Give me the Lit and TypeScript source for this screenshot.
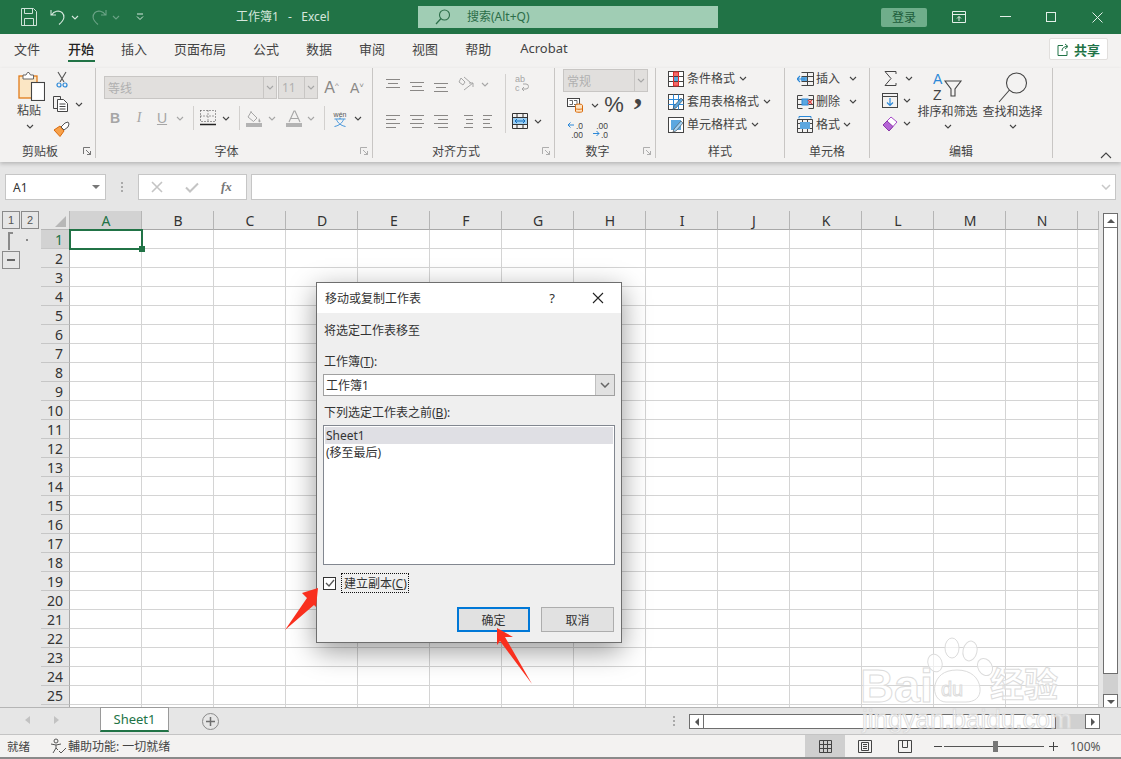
import { LitElement, html, css, svg } from "lit";
import { customElement } from "lit/decorators.js";

const ic = (w: number, h: number, c: unknown) => html`<svg width=${w} height=${h} viewBox="0 0 ${w} ${h}" fill="none">${c}</svg>`;
const chev = (col = "#444") => ic(8, 5, svg`<path d="M1 1l3 3 3-3" stroke=${col} stroke-width="1.1"/>`);
const lines = (ys: number[], xs: [number, number][], col = "#8a8886") =>
  ic(16, 16, ys.map((y, i) => svg`<path d="M${xs[i][0]} ${y + 0.5}H${xs[i][1]}" stroke=${col}/>`));
const D = "#a6a6a6";

const icons = {
  save: ic(16, 18, svg`<path d="M.5.5h12l3 3v14H.5z M3.5.5v5h8v-5 M3.5 17.5v-7h9v7" stroke="#cfe3d8"/>`),
  undo: ic(16, 18, svg`<path d="M1 2v5h5M1.500 7C4 3 9 2 12 4.500c3 3 3 7-3 12" stroke="#d6e8de" stroke-width="1.1"/>`),
  redo: ic(16, 18, svg`<path d="M15 2v5h-5M14.500 7C12 3 7 2 4 4.500c-3 3-3 7 3 12" stroke="#6ba386" stroke-width="1.1"/>`),
  qat: ic(8, 8, svg`<path d="M1 1h6M1 3.500l3 3 3-3" stroke="#d6e8de"/>`),
  search: ic(16, 16, svg`<circle cx="9.500" cy="6" r="5" stroke="#2c6e49" stroke-width="1.1"/><path d="M6 9.500L1 15" stroke="#2c6e49" stroke-width="1.2"/>`),
  ribbonDisp: ic(14, 12, svg`<path d="M.5.5h13v11H.5zM.5 3.500h13M7 10V5.500M5 7.500l2-2 2 2" stroke="#e3efe8"/>`),
  min: ic(11, 2, svg`<path d="M0 .5h11" stroke="#e3efe8"/>`),
  max: ic(10, 10, svg`<rect x=".5" y=".5" width="9" height="9" stroke="#e3efe8"/>`),
  close: ic(11, 11, svg`<path d="M.5.500l10 10M10.500.500l-10 10" stroke="#e3efe8"/>`),
  share: ic(13, 13, svg`<path d="M6 2.500H1v10h9V8M5 8c0-3 2-4.500 5-4.500M8 1l3 2.500L8 6" stroke="#217346" stroke-width="1"/>`),
  paste: ic(27, 29, svg`<rect x="1" y="4" width="18" height="22" fill="#fbe6c4" stroke="#e07b1a" stroke-width="1.300"/><path d="M5 7V3h3l1.500-2.500h1.500l1.500 2.500h3v4z" fill="#fff" stroke="#666"/><rect x="13.500" y="10.500" width="13" height="18" fill="#fff" stroke="#444" stroke-width="1.100"/>`),
  cut: ic(12, 17, svg`<path d="M2 1l6 10M10 1l-6 10" stroke="#555" stroke-width="1.100"/><circle cx="3" cy="14" r="2" stroke="#2b88d8" stroke-width="1.200"/><circle cx="9" cy="14" r="2" stroke="#2b88d8" stroke-width="1.200"/>`),
  copy: ic(16, 16, svg`<path d="M4.500 12.500H.5V.5h7v3" stroke="#444"/><path d="M4.500 3.500h6l4 4v8h-10z M6.500 8h6M6.500 10.500h6M6.500 13h6" stroke="#444" fill="#fff"/>`),
  brush: ic(17, 16, svg`<path d="M1 9l6-4 4 5-4 5.500z" fill="#f7a14a" stroke="#d9690b"/><path d="M8 6l4-4 3-1 1 2-1 3-4 3z" fill="#fff" stroke="#555"/>`),
  launcher: (c = "#666") => ic(8, 8, svg`<path d="M.5 7V.5H7M3 3l4.500 4.500M7.500 4v3.500H4" stroke=${c} stroke-width=".9"/>`),
  bold: html`<span class="glyph b">B</span>`,
  italic: html`<span class="glyph i">I</span>`,
  under: html`<span class="glyph u">U</span>`,
  border: ic(16, 16, svg`<path d="M.5.500h15v11H.5zM8 .5v11M.5 6h15" stroke="#444" stroke-dasharray="1 2"/><path d="M0 14.500h16" stroke="#222" stroke-width="1.500"/>`),
  fill: ic(17, 17, svg`<path d="M5 2l6 6-3.500 3.500L2 7z M5 2V1" stroke="#a6a6a6"/><path d="M13 8c1 2 1.500 2.500 1.500 3.500s-2 1-2 0 0-1 .5-3.500" fill="#a6a6a6"/><rect y="13" width="16" height="4" fill="#b3b3b3"/>`),
  fontcol: html`<svg width="17" height="17" viewBox="0 0 17 17" fill="none"><path d="M3 12L8 1h1l5 11M5 8.500h7" stroke="#a6a6a6" stroke-width="1.100"/><rect y="13" width="16" height="4" fill="#b3b3b3"/></svg>`,
  wen: html`<svg width="16" height="17" viewBox="0 0 16 17" fill="none"><text x="8" y="6.500" text-anchor="middle" font-size="7" fill="#555" font-family="Liberation Sans">wén</text><path d="M2.500 9h11M8 7.500v1.500M4.500 9.500c1 3 4 6 9 7M11.500 9.500c-1 3-4 6-9 7" stroke="#2b88d8" stroke-width=".9"/></svg>`,
  orient: ic(17, 16, svg`<path d="M3 2l4 4-2 3-4-3zM6 1l7 6M6 14l9-7M15 11V7h-4" stroke="#a6a6a6"/>`),
  wrap: ic(14, 18, svg`<text x="0" y="7" font-size="9" fill="#a6a6a6" font-family="Liberation Sans">ab</text><text x="0" y="16" font-size="9" fill="#a6a6a6" font-family="Liberation Sans">c</text><path d="M7 14h4a2 2 0 0 0 0-5H8M9 12l-2 2 2 2" stroke="#a6a6a6"/>`),
  merge: ic(16, 16, svg`<path d="M.5.5h15v15H.5zM.5 4.500h15M.5 11.500h15M5 .5v4M11 .5v4M5 11.500v4M11 11.500v4" stroke="#333"/><rect x="1" y="5" width="14" height="6" fill="#9fd0f3"/><path d="M3 8h10M5 6l-2 2 2 2M11 6l2 2-2 2" stroke="#0f6cbd"/>`),
  acct: ic(16, 16, svg`<rect x=".5" y="1.500" width="12" height="8" fill="#fff" stroke="#444"/><path d="M2.500 3.500h3v4h-3M7 3.500h3v4H7" stroke="#444" stroke-width=".8"/><ellipse cx="12" cy="8.500" rx="3.500" ry="1.500" fill="#fde3c2" stroke="#d9690b"/><path d="M8.500 8.500v6c0 1 7 1 7 0v-6M8.500 11.500c0 1 7 1 7 0" fill="#fde3c2" stroke="#d9690b"/>`),
  dec1: html`<svg width="16" height="17" viewBox="0 0 16 17" fill="none"><path d="M7 4H1M3.500 1.500L1 4l2.500 2.500" stroke="#2b88d8"/><text x="16" y="8" text-anchor="end" font-size="8.500" fill="#444" font-family="Liberation Sans">.0</text><text x="16" y="16.500" text-anchor="end" font-size="8.500" fill="#444" font-family="Liberation Sans">.00</text></svg>`,
  dec2: html`<svg width="16" height="17" viewBox="0 0 16 17" fill="none"><text x="16" y="8" text-anchor="end" font-size="8.500" fill="#444" font-family="Liberation Sans">.00</text><path d="M1 12.500h6M4.500 10L7 12.500 4.500 15" stroke="#2b88d8"/><text x="16" y="16.500" text-anchor="end" font-size="8.500" fill="#444" font-family="Liberation Sans">.0</text></svg>`,
  cond: ic(16, 16, svg`<rect x=".5" y=".5" width="15" height="15" fill="#fff" stroke="#444"/><rect x="5" y="1" width="6" height="5" fill="#f26a6a"/><rect x="5" y="6" width="6" height="5" fill="#5ba7e0"/><rect x="5" y="11" width="6" height="4" fill="#f26a6a"/><path d="M5.500.5v15M10.500.5v15M.5 5.500h15M.5 10.500h15" stroke="#444"/><path d="M5.500 1v14h5V1z" stroke="#e02b2b"/>`),
  table: ic(17, 16, svg`<rect x=".5" y=".5" width="15" height="15" fill="#fff" stroke="#444"/><path d="M5.500.5v15M10.500.5v15M.5 5.500h15M.5 10.500h15" stroke="#2b88d8"/><path d="M5 15l1-3 7-8 2 2-7 8z" fill="#5ba7e0" stroke="#444" stroke-width=".6"/>`),
  cellsty: ic(17, 16, svg`<rect x=".5" y=".5" width="15" height="15" fill="#fff" stroke="#444"/><rect x="3" y="3" width="10" height="10" fill="#5ba7e0"/><path d="M5 15l1-3 7-8 2 2-7 8z" fill="#9fd0f3" stroke="#444" stroke-width=".6"/>`),
  ins: ic(17, 14, svg`<path d="M4.500.5h12v13h-12M10.500.5v13M4.500 4.500h12M4.500 9.500h12" stroke="#444"/><rect x="4" y="5" width="6" height="4" fill="#5ba7e0"/><path d="M0 7h8M3 4L0 7l3 3" stroke="#2b88d8" stroke-width="1.200"/>`),
  del: ic(17, 14, svg`<path d="M5.500.5H.5v13h5M.5 4.500h5M.5 9.500h5M11.500.5h5v13h-5M11.500 4.500h5M11.500 9.500h5" stroke="#444"/><rect x="5" y="4" width="6" height="6" fill="#5ba7e0" stroke="#2b88d8"/><path d="M11 5l4 4M15 5l-4 4" stroke="#e04343" stroke-width="1.200"/>`),
  fmt: ic(16, 17, svg`<path d="M.5 3.500h15v13H.5zM.5 7.500h15M.5 12.500h15M5.500 3.500v13M10.500 3.500v13" stroke="#444"/><rect x="3" y="6" width="10" height="7" fill="#5ba7e0"/><path d="M2 .5h12M2 2.500v-2M14 2.500v-2" stroke="#2b88d8"/>`),
  sigma: ic(13, 15, svg`<path d="M12 3V.5H1l6 7-6 7h11V12" stroke="#444"/>`),
  filld: ic(16, 15, svg`<rect x=".5" y=".5" width="15" height="14" stroke="#444"/><path d="M.5 3.500h15" stroke="#444"/><path d="M8 5v7M5 9.500L8 12.500l3-3" stroke="#2b88d8" stroke-width="1.200"/>`),
  eraser: ic(16, 16, svg`<path d="M1 9l8-8 6 5-8 9z" fill="#fff" stroke="#a64ac9"/><path d="M1 9l4-4 6 5.500-4 4.500z" fill="#b565d6" stroke="#8a3aa8"/>`),
  sort: html`<svg width="30" height="29" viewBox="0 0 30 29" fill="none"><text x="0" y="12" font-size="14" fill="#2b88d8" font-family="Liberation Sans">A</text><text x="0" y="28" font-size="14" fill="#444" font-family="Liberation Sans">Z</text><path d="M12 9h16l-6 8v7h-4v-7z" stroke="#444" stroke-width="1.100"/></svg>`,
  find: ic(30, 32, svg`<circle cx="18.500" cy="11" r="10" stroke="#444" stroke-width="1.100"/><path d="M11.500 18L1 30" stroke="#444" stroke-width="1.100"/>`),
  xGray: ic(12, 12, svg`<path d="M1 1l10 10M11 1L1 11" stroke="#c4c4c4" stroke-width="1.600"/>`),
  check: ic(14, 11, svg`<path d="M1 5.500l4 4 8-8" stroke="#c4c4c4" stroke-width="2"/>`),
  bigChev: (c = "#c4c4c4") => ic(10, 6, svg`<path d="M1 1l4 4 4-4" stroke=${c} stroke-width="1.500"/>`),
  viewGrid: ic(13, 13, svg`<path d="M.5.5h12v12H.5zM4.500.5v12M8.500.5v12M.5 4.500h12M.5 8.500h12" stroke="#444"/>`),
  viewPage: ic(14, 13, svg`<path d="M.5.5h13v12H.5zM3.500 2.500h7v8h-7zM5 4.500h4M5 6.500h4M5 8.500h4" stroke="#444"/>`),
  viewBreak: ic(14, 13, svg`<path d="M.5.5h13v12H.5zM4.500.5v7h5v-7" stroke="#444"/>`),
};

type Slot = [number, unknown];
const rowOf = (items: Slot[]) => items.map(([w, c]) => html`<span class="slot" style="width:${w}px">${c}</span>`);
const SEP = html`<span class="vsep"></span>`;
const COLS = ["A","B","C","D","E","F","G","H","I","J","K","L","M","N",""];

@customElement("app-root")
export class AppRoot extends LitElement {
  static styles = css`
    :host { display:block; position:relative; width:1121px; height:759px; overflow:hidden; background:#e6e6e6;
      font-family:"Noto Sans","Noto Sans CJK SC",sans-serif; font-size:12px; color:#444; }
    * { box-sizing:border-box; }
    svg { display:block; flex:none; }
    .title { height:34px; background:#217346; color:#d5e6dc; display:flex; align-items:center; font-size:12px; }
    .qat { display:flex; align-items:center; width:236px; padding-left:21px; }
    .docname { width:182px; font-size:12px; white-space:pre; word-spacing:1.500px; padding-bottom:3px; }
    .searchbox { width:300px; height:22px; background:#a0cdb4; display:flex; align-items:center; padding-left:17px; gap:16px; color:#2c6e49; }
    .searchbox span { padding-bottom:2px; }
    .login { margin-left:163px; width:46px; height:19px; background:#6fae8b; border-radius:2px; color:#1c5c3a; display:flex; align-items:center; justify-content:center; font-size:12px; padding-bottom:1px; }
    .winbtns { display:flex; align-items:center; margin-left:9px; }
    .slot { display:flex; align-items:center; justify-content:center; flex:none; }
    .tabs { height:34px; background:#f3f2f1; display:flex; align-items:center; padding-left:14px; gap:27px; font-size:13px; position:relative; color:#444; }
    .tab { height:34px; display:flex; align-items:center; position:relative; padding-bottom:6px; }
    .tab:first-child { margin-right:1px; }
    .tab.on { color:#222; font-weight:500; }
    .tab.on::after { content:""; position:absolute; left:0; right:-1px; bottom:6px; height:2px; background:#217346; }
    .acro { font-size:13px; margin-left:2px; }
    .shareb { position:absolute; right:13px; top:4px; width:59px; height:22px; background:#fff; border:1px solid #e1dfdd; border-radius:2px; display:flex; align-items:center; justify-content:center; gap:4px; color:#217346; font-weight:700; font-size:13px; }
    .ribbon { height:94px; background:#f3f2f1; display:flex; box-shadow:0 2px 4px rgba(0,0,0,.2); position:relative; }
    .grp { height:90px; border-right:1px solid #c8c6c4; position:relative; display:flex; flex-direction:column; flex:none; }
    .body { height:74px; flex:none; display:flex; flex-direction:column; }
    .lab { height:16px; display:grid; grid-template-columns:1fr auto 1fr; align-items:center; color:#444; font-size:12px; }
    .lab.hasl { padding-right:15px; position:relative; }
    .lab > span:first-child { grid-column:2; }
    .lab .launch { position:absolute; right:4px; top:5px; display:block; }
    .r { display:flex; align-items:center; }
    .top { display:flex; align-items:flex-start; }
    .vsep { width:1px; height:24px; background:#d2d0ce; display:block; }
    .asep { position:absolute; left:132px; top:6px; width:1px; height:59px; background:#d2d0ce; }
    .combo { height:23px; background:#e1dfdd; border:1px solid #c8c6c4; color:#b0b0b0; display:flex; align-items:center; padding-left:3px; flex:none; }
    .combo .dd { margin-left:auto; width:13px; height:100%; border-left:1px solid #c8c6c4; display:flex; align-items:center; justify-content:center; }
    .glyph { font-family:"Liberation Serif",serif; font-size:14px; color:#a6a6a6; }
    .glyph.b { font-family:"Liberation Sans"; font-weight:700; }
    .glyph.i { font-style:italic; }
    .glyph.u { font-family:"Liberation Sans"; text-decoration:underline; }
    .bigA { font-family:"Liberation Sans"; color:#8a8886; font-size:16px; }
    .bigA small { font-size:8px; vertical-align:5px; }
    .pctg { font:400 22px "Liberation Sans"; color:#444; }
    .comma { font:700 34px/10px "Liberation Serif"; color:#444; display:block; height:10px; transform:translateY(-12px); }
    .gsp { display:flex; align-items:center; height:23px; padding-left:12px; }
    .gsp .t { margin-left:3px; margin-right:4px; color:#444; white-space:nowrap; padding-bottom:1px; }
    .col { display:flex; flex-direction:column; align-items:center; }
    .fbar { height:49px; background:#e6e6e6; display:flex; padding:12px 5px 0 5px; }
    .fbox { height:26px; background:#fff; border:1px solid #c6c6c6; display:flex; align-items:center; flex:none; }
    .name { width:101px; padding-left:7px; font-size:12px; color:#333; }
    .tri { margin-left:auto; margin-right:5px; width:0; height:0; border:4px solid transparent; border-top:4px solid #777; border-bottom:0; }
    .dots { width:32px; display:flex; flex-direction:column; align-items:center; justify-content:center; gap:2px; height:26px; flex:none; }
    .dots i { width:2px; height:2px; background:#aaa; display:block; }
    .fx { width:109px; justify-content:flex-start; padding-left:12px; }
    .fx .f { font-family:"Liberation Serif",serif; font-style:italic; font-weight:700; font-size:13px; color:#777; margin-left:22px; }
    .finput { margin-left:4px; flex:1; justify-content:flex-end; padding-right:4px; }
    .sheet { height:496px; display:flex; background:#e6e6e6; position:relative; overflow:hidden; }
    .outline { width:41px; flex:none; position:relative; }
    .olbtns { display:flex; padding-left:2px; gap:1px; }
    .olb { width:18px; height:18px; border:1px solid #8a8a8a; display:flex; align-items:center; justify-content:center; font-size:11px; color:#555; font-family:"Liberation Sans"; }
    .olbr { height:20px; margin:3px 0 0 8px; position:relative; display:flex; }
    .olbr i { width:5px; height:18px; border-left:2px solid #8a8a8a; border-top:2px solid #8a8a8a; display:block; }
    .olbr b { width:2px; height:2px; background:#888; margin:7px 0 0 13px; display:block; }
    .olm { width:18px; height:18px; margin-left:2px; border:1px solid #8a8a8a; display:flex; align-items:center; justify-content:center; }
    .olm i { width:8px; height:2px; background:#666; display:block; }
    .grid { width:1058px; flex:none; display:grid; grid-template-columns:29px repeat(14,72px) 21px; grid-auto-rows:19px; background:#fff; position:relative; }
    .corner { background:#e6e6e6; position:relative; border-right:1px solid #b5b5b5; border-bottom:1px solid #b5b5b5; display:flex; justify-content:flex-end; align-items:flex-end; padding:0 3px 2px 0; }
    .corner i { width:0; height:0; border-left:11px solid transparent; border-bottom:11px solid #b7b7b7; display:block; }
    .ch { background:#e6e6e6; border-right:1px solid #b5b5b5; border-bottom:1px solid #a8a8a8; display:flex; align-items:center; justify-content:center; font-size:14px; color:#333; font-family:"Noto Sans"; padding:1px 0 0 1px; }
    .ch.on, .rh.on { background:#d2d2d2; color:#217346; }
    .rh { background:#e6e6e6; border-right:1px solid #a8a8a8; border-bottom:1px solid #c6c6c6; display:flex; align-items:center; justify-content:flex-end; padding:1px 6px 0 0; font-size:14px; color:#333; }
    .c { border-right:1px solid #d4d4d4; border-bottom:1px solid #d4d4d4; background:#fff; }
    .sel { position:absolute; left:28px; top:18px; width:74px; height:21px; border:2px solid #217346; pointer-events:none; }
    .sel i { position:absolute; right:-4px; bottom:-4px; width:6px; height:6px; background:#217346; display:block; }
    .vsb { flex:1; position:relative; padding:2px 0 0 4px; display:flex; flex-direction:column; }
    .sb { width:15px; border:1px solid #6e6e6e; background:#fff; flex:none; display:flex; align-items:center; justify-content:center; }
    .sb.btn { height:15px; }
    .vthumb { height:446px; border-top:0; }
    .vtrack { width:15px; height:20px; background:#d0d0d0; flex:none; }
    .up { width:0; height:0; border:4px solid transparent; border-bottom:4px solid #555; border-top:0; display:block; }
    .dn { width:0; height:0; border:4px solid transparent; border-top:4px solid #555; border-bottom:0; display:block; }
    .lf { width:0; height:0; border:4px solid transparent; border-right:4px solid #555; border-left:0; display:block; }
    .rt { width:0; height:0; border:4px solid transparent; border-left:4px solid #555; border-right:0; display:block; }
    .tabsbar { height:28px; background:#e6e6e6; border-top:1px solid #b5b5b5; border-bottom:1px solid #c4c4c4; display:flex; position:relative; align-items:flex-start; }
    .navs { width:100px; flex:none; display:flex; padding:8px 0 0 25px; gap:24px; }
    .lfg { width:0; height:0; border:4px solid transparent; border-right:5px solid #c2c2c2; border-left:0; display:block; }
    .rtg { width:0; height:0; border:4px solid transparent; border-left:5px solid #c2c2c2; border-right:0; display:block; }
    .stab { width:69px; height:25px; margin-top:-1px; background:#fff; border:1px solid #9a9a9a; border-bottom:2px solid #217346; color:#217346; display:flex; align-items:center; justify-content:center; font-size:13px; flex:none; }
    .add { width:17px; height:17px; margin:5px 0 0 33px; border:1.500px solid #8a8a8a; border-radius:50%; position:relative; flex:none; color:#6e6e6e; display:flex; align-items:center; justify-content:center; }
    .hs { margin-left:auto; display:flex; align-items:flex-start; padding:6px 21px 0 0; }
    .hdots { width:18px; display:flex; flex-direction:column; gap:2px; align-items:center; padding-top:2px; margin-right:6px; }
    .hdots i { width:2px; height:2px; background:#aaa; display:block; }
    .hb { width:15px; height:15px; border:1px solid #6e6e6e; background:#fff; display:flex; align-items:center; justify-content:center; flex:none; }
    .hthumb { width:353px; height:15px; border:1px solid #6e6e6e; background:#fff; flex:none; margin-left:-1px; }
    .htrack { width:29px; height:15px; background:#d0d0d0; flex:none; }
    .status { height:22px; background:#f3f2f1; display:flex; align-items:center; padding-left:7px; position:relative; font-size:11.500px; color:#444; }
    .s1 { width:33px; }
    .s2 { display:flex; align-items:center; gap:1px; margin-left:10px; font-size:12px; }
    .vbtns { margin-left:auto; display:flex; align-items:center; height:22px; }
    .vb { width:40px; height:22px; display:flex; align-items:center; justify-content:center; flex:none; }
    .vb.on { background:#cfcfcf; }
    .zm { display:flex; align-items:center; margin-left:9px; width:124px; color:#444; }
    .zline { width:100px; height:1px; background:#555; position:relative; flex:none; display:block; margin:0 5px 0 2px; }
    .zline i { position:absolute; left:49px; top:-5px; width:5px; height:11px; background:#777; display:block; }
    .pct { width:63px; padding-left:12px; font-size:12px; color:#555; }
    .foot { height:2px; background:#8a8a8a; }
    .dlg { position:absolute; left:316px; top:282px; width:306px; height:361px; background:#efefef; border:1px solid #6e6e6e; box-shadow:0 8px 26px rgba(0,0,0,.4); display:flex; flex-direction:column; color:#333; }
    .dhead { height:30px; background:#fff; flex:none; display:flex; align-items:center; padding-left:8px; font-size:12px; }
    .dhead .q { margin-left:auto; width:46px; text-align:center; font-size:13px; }
    .dhead .x { width:46px; display:flex; justify-content:center; margin-right:0; }
    .dbody { padding:0 6px; flex:1; display:flex; flex-direction:column; }
    .d1 { margin-top:9px; height:17px; line-height:17px; padding-left:1px; }
    .d2 { margin-top:14px; height:17px; line-height:17px; padding-left:1px; }
    .dcombo { margin-top:4px; height:22px; width:292px; border:1px solid #a0a0a0; background:#fff; display:flex; align-items:center; padding-left:2px; flex:none; }
    .dcombo .dd { margin-left:auto; width:19px; height:100%; background:#e1e1e1; border-left:1px solid #c0c0c0; display:flex; align-items:center; justify-content:center; }
    .d3 { margin-top:8px; height:17px; line-height:17px; padding-left:1px; }
    .dlist { margin-top:4px; height:140px; width:292px; border:1px solid #828790; background:#fff; padding:1px; flex:none; }
    .dlist div { height:17px; line-height:17px; padding-left:1px; }
    .dlist .s { background:#dfdfe4; }
    .chk { display:flex; align-items:center; margin-top:8px; height:20px; }
    .cbx { width:13px; height:13px; border:1px solid #333; background:#fff; display:flex; align-items:center; justify-content:center; flex:none; }
    .clab { margin-left:5px; width:68px; height:20px; border:1px dotted #111; display:flex; align-items:center; padding-left:2px; white-space:nowrap; }
    .dbtns { display:flex; justify-content:flex-end; gap:11px; margin-top:14px; padding-right:1px; }
    .dbtn { width:73px; height:25px; background:#e1e1e1; border:1px solid #adadad; display:flex; align-items:center; justify-content:center; }
    .dbtn.def { border:2px solid #0078d7; }
    .ov { position:absolute; left:0; top:0; pointer-events:none; }
    .colp { position:absolute; left:1100px; top:84px; }
    .pastec { width:52px; padding:4px 0 0 18px; align-items:flex-start; }
    .pastec .lbl { margin:2px 0 0 -1px; line-height:16px; white-space:nowrap; }
    .pastec .ch2 { margin:5px 0 0 8px; }
    .clipc { width:34px; align-items:flex-start; padding:3px 0 0 1px; }
    .edc { width:48px; align-items:flex-start; padding:0 0 0 12px; }
    .sortc { width:65px; padding-top:4px; margin-left:-3px; }
    .findc { width:65px; padding-top:4px; }
    .sortc .lbl2 { margin-top:3px; line-height:16px; white-space:nowrap; }
    .findc .lbl2 { line-height:16px; white-space:nowrap; }
    .c5 { margin-top:4px; }
  `;

  render() {
    const rows = Array.from({ length: 26 }, (_, i) => i + 1);
    return html`
      <div class="title">
        <div class="qat">
          ${rowOf([[16, icons.save],[13, ""],[16, icons.undo],[2,""],[14, chev("#d6e8de")],[9,""],[16, icons.redo],[2,""],[14, chev("#6ba386")],[9,""],[16, icons.qat]])}
        </div>
        <div class="docname">工作簿1  -  Excel</div>
        <div class="searchbox">${icons.search}<span>搜索(Alt+Q)</span></div>
        <div class="login">登录</div>
        <div class="winbtns">
          ${rowOf([[46, icons.ribbonDisp],[46, icons.min],[46, icons.max],[46, icons.close]])}
        </div>
      </div>

      <div class="tabs">
        ${["文件","开始","插入","页面布局","公式","数据","审阅","视图","帮助"].map((t) => html`<div class="tab ${t === "开始" ? "on" : ""}">${t}</div>`)}
        <div class="tab acro">Acrobat</div>
        <div class="shareb">${icons.share}<span>共享</span></div>
      </div>

      <div class="ribbon">
        ${this.grp(96, "剪贴板", "#666", html`
          <div class="top">
            <div class="col pastec">
              ${icons.paste}<div class="lbl">粘贴</div><div class="ch2">${chev()}</div>
            </div>
            <div class="col clipc">
              <div style="padding-left:3px">${icons.cut}</div>
              <div class="r" style="margin-top:8px;gap:6px">${icons.copy}${chev()}</div>
              <div style="margin-top:9px">${icons.brush}</div>
            </div>
          </div>`)}
        ${this.grp(277, "字体", "#a6a6a6", html`
          <div class="r" style="padding:8px 0 0 8px">
            <div class="combo" style="width:173px"><span>等线</span><span class="dd">${chev(D)}</span></div>
            <div class="combo" style="width:40px;margin-left:1px"><span>11</span><span class="dd">${chev(D)}</span></div>
            ${rowOf([[27, html`<span class="bigA">A<small>^</small></span>`],[24, html`<span class="bigA" style="font-size:14px">A<small>˅</small></span>`]])}
          </div>
          <div class="r" style="height:24px;margin:7px 0 0 7px">
            ${rowOf([[24, icons.bold],[24, icons.italic],[22, icons.under],[14, chev(D)],[12, SEP],[18, icons.border],[18, chev()],[8, SEP],[22, icons.fill],[14, chev(D)],[4,""],[22, icons.fontcol],[12, chev(D)],[14, SEP],[18, icons.wen],[18, chev()]])}
          </div>`)}
        ${this.grp(182, "对齐方式", "#a6a6a6", html`
          <span class="asep"></span>
          <div class="r" style="height:30px;margin:1px 0 0 8px">
            ${rowOf([[24, lines([3,7,11],[[1,15],[3,13],[1,15]])],[24, lines([6,10,14],[[1,15],[3,13],[1,15]])],[24, lines([7,11,15],[[1,15],[3,13],[1,15]])],[26, icons.orient],[12, chev(D)],[16,""],[30, icons.wrap]])}
          </div>
          <div class="r" style="height:24px;margin:10px 0 0 8px">
            ${rowOf([[24, lines([2,6,10,14],[[1,15],[1,11],[1,15],[1,11]])],[24, lines([2,6,10,14],[[1,15],[3,13],[1,15],[3,13]])],[24, lines([2,6,10,14],[[1,15],[5,15],[1,15],[5,15]])],[25, lines([2,6,10,14],[[6,15],[8,15],[8,15],[6,15]])],[24, lines([2,6,10,14],[[1,10],[1,8],[1,8],[1,10]])],[8,""],[20, icons.merge],[16, chev()]])}
          </div>`)}
        ${this.grp(101, "数字", "#a6a6a6", html`
          <div class="combo" style="width:85px;margin:1px 0 0 8px"><span>常规</span><span class="dd">${chev(D)}</span></div>
          <div class="r" style="height:24px;margin:1px 0 0 12px">
            ${rowOf([[16, icons.acct],[6,""],[12, chev()],[1,""],[24, html`<span class="pctg">%</span>`],[24, html`<span class="comma">,</span>`]])}
          </div>
          <div class="r" style="height:22px;margin:1px 0 0 12px;gap:9px">${icons.dec1}${icons.dec2}</div>`)}
        ${this.grp(129, "样式", null, html`
          <div class="gsp" style="margin-top:-1px">${icons.cond}<span class="t">条件格式</span>${chev()}</div>
          <div class="gsp">${icons.table}<span class="t" style="margin-left:2px">套用表格格式</span>${chev()}</div>
          <div class="gsp">${icons.cellsty}<span class="t" style="margin-left:2px">单元格样式</span>${chev()}</div>`)}
        ${this.grp(85, "单元格", null, html`
          <div class="gsp" style="margin-top:-1px">${icons.ins}<span class="t" style="margin:0 9px 0 2px">插入</span>${chev()}</div>
          <div class="gsp">${icons.del}<span class="t" style="margin:0 9px 0 2px">删除</span>${chev()}</div>
          <div class="gsp">${icons.fmt}<span class="t" style="margin-right:3px">格式</span>${chev()}</div>`)}
        ${this.grp(183, "编辑", null, html`
          <div class="top">
            <div class="col edc">
              <div class="r" style="height:20px;gap:8px;padding-left:2px">${icons.sigma}${chev()}</div>
              <div class="r" style="height:23px;gap:5px;margin-top:1px">${icons.filld}${chev()}</div>
              <div class="r" style="height:23px;gap:5px">${icons.eraser}${chev()}</div>
            </div>
            <div class="col sortc">${icons.sort}<div class="lbl2">排序和筛选</div><div class="c5">${chev()}</div></div>
            <div class="col findc">${icons.find}<div class="lbl2">查找和选择</div><div class="c5">${chev()}</div></div>
          </div>`)}
        <svg class="ov colp" width="12" height="8" viewBox="0 0 12 8" fill="none"><path d="M1 6l5-5 5 5" stroke="#444" stroke-width="1.100"/></svg>
      </div>

      <div class="fbar">
        <div class="fbox name">A1<span class="tri"></span></div>
        <div class="dots"><i></i><i></i><i></i></div>
        <div class="fbox fx">${icons.xGray}<span style="width:22px"></span>${icons.check}<span class="f">fx</span></div>
        <div class="fbox finput">${icons.bigChev("#c8c8c8")}</div>
      </div>

      <div class="sheet">
        <div class="outline">
          <div class="olbtns"><div class="olb">1</div><div class="olb">2</div></div>
          <div class="olbr"><i></i><b></b></div>
          <div class="olm" style="margin-top:-1px"><i></i></div>
        </div>
        <div class="grid">
          <div class="corner"><i></i></div>
          ${COLS.map((c) => html`<div class="ch ${c === "A" ? "on" : ""}">${c}</div>`)}
          ${rows.map((r) => html`
            <div class="rh ${r === 1 ? "on" : ""}">${r}</div>
            ${COLS.map(() => html`<div class="c"></div>`)}
          `)}
          <div class="sel"><i></i></div>
        </div>
        <div class="vsb">
          <div class="sb btn"><span class="up"></span></div>
          <div class="sb vthumb"></div>
          <div class="vtrack"></div>
          <div class="sb btn"><span class="dn"></span></div>
        </div>
      </div>

      <div class="tabsbar">
        <div class="navs"><span class="lfg"></span><span class="rtg"></span></div>
        <div class="stab">Sheet1</div>
        <div class="add">${ic(9, 9, svg`<path d="M4.500 0v9M0 4.500h9" stroke="#6e6e6e" stroke-width="1.500"/>`)}</div>
        <div class="hs">
          <div class="hdots"><i></i><i></i><i></i></div>
          <div class="hb"><span class="lf"></span></div>
          <div class="hthumb"></div>
          <div class="htrack"></div>
          <div class="hb"><span class="rt"></span></div>
        </div>
      </div>

      <div class="status">
        <span class="s1">就绪</span>
        <span class="s2">
          ${ic(17, 16, svg`<circle cx="6" cy="3" r="2" stroke="#555"/><path d="M1 6l5 1 5-1M6 7v3l-3 5M6 10l2 2M9 13l2 2 5-5" stroke="#555"/>`)}
          <span>輔助功能: 一切就绪</span>
        </span>
        <div class="vbtns">
          <div class="vb on">${icons.viewGrid}</div>
          <div class="vb">${icons.viewPage}</div>
          <div class="vb">${icons.viewBreak}</div>
          <div class="zm">${ic(8, 1, svg`<path d="M0 .5h8" stroke="#444"/>`)}<span class="zline"><i></i></span>${ic(9, 9, svg`<path d="M4.500 0v9M0 4.500h9" stroke="#444"/>`)}</div>
          <div class="pct">100%</div>
        </div>
      </div>
      <div class="foot"></div>

      <div class="dlg">
        <div class="dhead">移动或复制工作表<span class="q">?</span><span class="x">${ic(12, 12, svg`<path d="M1 1l10 10M11 1L1 11" stroke="#222" stroke-width="1.100"/>`)}</span></div>
        <div class="dbody">
          <div class="d1">将选定工作表移至</div>
          <div class="d2">工作簿(<u>T</u>):</div>
          <div class="dcombo"><span>工作簿1</span><span class="dd">${icons.bigChev("#666")}</span></div>
          <div class="d3">下列选定工作表之前(<u>B</u>):</div>
          <div class="dlist"><div class="s">Sheet1</div><div>(移至最后)</div></div>
          <div class="chk">
            <span class="cbx">${ic(10, 8, svg`<path d="M1 4l3 3 5-6" stroke="#555" stroke-width="1.300"/>`)}</span>
            <span class="clab">建立副本(<u>C</u>)</span>
          </div>
          <div class="dbtns"><div class="dbtn def">确定</div><div class="dbtn">取消</div></div>
        </div>
      </div>

      <svg class="ov" width="1121" height="759" viewBox="0 0 1121 759" fill="none">
        <path d="M318 588L302 593L307 598L285 630L314 605L316 607Z" fill="#f92f1e"/>
        <path d="M497 628L513 637L505 637L532 684L500 641L497 645Z" fill="#f92f1e"/>
        <g stroke="#dcdcdc" stroke-width="1" fill="#ffffff" fill-opacity=".6">
          <ellipse cx="952" cy="648" rx="7" ry="10"/>
          <ellipse cx="970" cy="651" rx="7" ry="10" transform="rotate(12 970 651)"/>
          <ellipse cx="935" cy="663" rx="7" ry="9" transform="rotate(-20 935 663)"/>
          <ellipse cx="985" cy="667" rx="7" ry="9" transform="rotate(-30 985 667)"/>
          <path d="M935 685c2-8 8-15 22-15s22 8 23 18c1 10-6 14-14 14h-20c-8 0-13-8-11-17z"/>
          <text x="860" y="702" font-family="Liberation Sans" font-weight="700" font-size="47">Bai</text>
          <text x="941" y="696" font-family="Liberation Sans" font-size="20">du</text>
          <text x="990" y="697" font-family="Noto Sans CJK SC" font-weight="700" font-size="34">经验</text>
          <text x="862" y="728" font-family="Liberation Sans" font-size="26">jingyan.baidu.com</text>
        </g>
      </svg>
    `;
  }

  grp(w: number, label: string, launch: string | null, body: unknown) {
    return html`<div class="grp" style="width:${w}px">
      <div class="body">${body}</div>
      <div class="lab ${launch ? "hasl" : ""}"><span>${label}</span>${launch ? html`<span class="launch">${icons.launcher(launch)}</span>` : ""}</div>
    </div>`;
  }
}
